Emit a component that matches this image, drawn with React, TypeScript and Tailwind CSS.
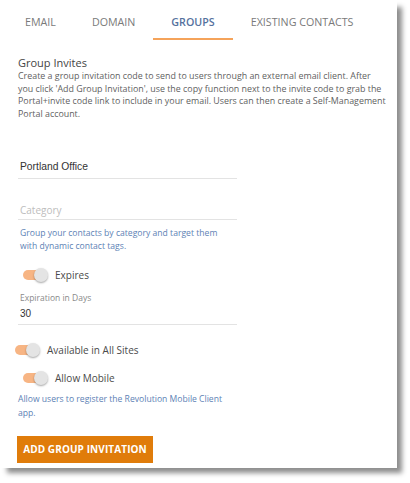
import React from "react";

const tabs = ["Email", "Domain", "Groups", "Existing Contacts"];

function Toggle({ label, className }: { label: string; className?: string }) {
  return (
    <div className={"flex h-[16px] items-center " + (className ?? "")}>
      <div className="relative h-[16px] w-[25px]">
        <div className="absolute left-0 top-[3px] h-[10px] w-[22px] rounded-full bg-[#f7b584]" />
        <div className="absolute left-[11px] top-[1px] h-[14px] w-[14px] rounded-full bg-[#e4e4e4] shadow-[0_1px_2px_rgba(0,0,0,0.35)]" />
      </div>
      <span className="ml-[7px] text-[10px] leading-[12px] text-[#4a4a4a]">{label}</span>
    </div>
  );
}

export default function App() {
  return (
    <div className="h-[483px] w-[410px] bg-white font-['Open_Sans',sans-serif]">
      <div className="h-[468px] w-[397px] bg-white shadow-[6px_6px_5px_-1px_rgba(0,0,0,0.45)]">
        <div className="flex pl-[7px]">
          {tabs.map((t) => {
            const active = t === "Groups";
            return (
              <div
                key={t}
                className={
                  "border-b-2 px-[18px] pb-[8px] pt-[14px] text-[10.7px] uppercase leading-[16px] " +
                  (active
                    ? "border-[#f5a35a] font-semibold text-[#55729e]"
                    : "border-transparent text-[#7a7a7a]")
                }
              >
                {t}
              </div>
            );
          })}
        </div>

        <div className="px-[18px]">
          <div className="mt-[16px] text-[11px] font-medium leading-[13px] text-[#444]">Group Invites</div>
          <p className="mt-[1px] whitespace-nowrap text-[8.9px] leading-[12.5px] text-[#5f5f5f]">
            Create a group invitation code to send to users through an external email client. After
            <br />
            you click 'Add Group Invitation', use the copy function next to the invite code to grab the
            <br />
            Portal+invite code link to include in your email. Users can then create a Self-Management
            <br />
            Portal account.
          </p>

          <div className="mt-[41px] w-[219px] border-b border-[#e3e3e3] pb-[5px] pl-[2px] font-['Liberation_Sans',sans-serif] text-[10.3px] leading-[12px] text-[#333]">
            Portland Office
          </div>

          <div className="mt-[25px] w-[219px] border-b border-[#e3e3e3] pb-[3px] pl-[2px] text-[10px] leading-[12px] text-[#bdbdbd]">
            Category
          </div>
          <p className="mt-[7px] whitespace-nowrap pl-[2px] text-[8.6px] leading-[13px] text-[#5d82b5]">
            Group your contacts by category and target them
            <br />
            with dynamic contact tags.
          </p>

          <Toggle label="Expires" className="ml-[5px] mt-[14px]" />

          <div className="mt-[10px] pl-[2px] text-[8.5px] leading-[10px] text-[#8a8a8a]">Expiration in Days</div>
          <div className="mt-[5px] w-[219px] border-b border-[#e3e3e3] pb-[4px] pl-[2px] font-['Liberation_Sans',sans-serif] text-[10px] leading-[12px] text-[#333]">
            30
          </div>

          <Toggle label="Available in All Sites" className="-ml-[3px] mt-[17px]" />
          <Toggle label="Allow Mobile" className="ml-[5px] mt-[12px]" />

          <p className="mt-[6px] whitespace-nowrap text-[8.6px] leading-[14px] text-[#5d82b5]">
            Allow users to register the Revolution Mobile Client
            <br />
            app.
          </p>

          <button className="mt-[16px] h-[27px] w-[136px] -ml-[1px] bg-[#e07c0a] text-[10px] font-bold uppercase tracking-[0.1px] text-white">
            Add Group Invitation
          </button>
        </div>
      </div>
    </div>
  );
}
